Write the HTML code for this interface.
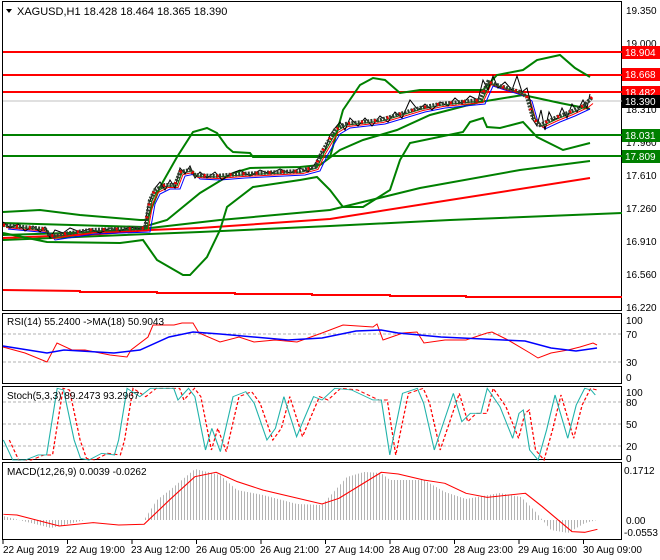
<!DOCTYPE html>
<html><head><meta charset="utf-8">
<style>
html,body{margin:0;padding:0;background:#fff;}
svg{display:block;font-family:"Liberation Sans",sans-serif;font-size:10px;}
</style></head><body>
<svg width="660" height="560" xmlns="http://www.w3.org/2000/svg">
<defs>
<pattern id="hp" x="0" y="0" width="3" height="10" patternUnits="userSpaceOnUse"><rect x="1" y="0" width="1" height="10" fill="#b4b4b4"/></pattern>
</defs>
<rect width="660" height="560" fill="#fff"/>
<g fill="none" stroke="#000" stroke-width="1">
<rect x="2.5" y="1.5" width="619" height="309"/>
<rect x="2.5" y="313.5" width="619" height="70"/>
<rect x="2.5" y="386.5" width="619" height="73"/>
<rect x="2.5" y="462.5" width="619" height="77"/>
</g>
<g stroke="#000"><line x1="3" y1="540" x2="3" y2="544"/><line x1="67.5" y1="540" x2="67.5" y2="544"/><line x1="132" y1="540" x2="132" y2="544"/><line x1="196.5" y1="540" x2="196.5" y2="544"/><line x1="261" y1="540" x2="261" y2="544"/><line x1="325.5" y1="540" x2="325.5" y2="544"/><line x1="390" y1="540" x2="390" y2="544"/><line x1="454.5" y1="540" x2="454.5" y2="544"/><line x1="519" y1="540" x2="519" y2="544"/><line x1="583.5" y1="540" x2="583.5" y2="544"/></g>

<line x1="3" y1="101" x2="622" y2="101" stroke="#c0c0c0"/>
<g stroke-width="2"><line x1="3" y1="52" x2="622" y2="52" stroke="#f00"/><line x1="3" y1="75" x2="622" y2="75" stroke="#f00"/><line x1="3" y1="92" x2="622" y2="92" stroke="#f00"/><line x1="3" y1="135" x2="622" y2="135" stroke="#008000"/><line x1="3" y1="156" x2="622" y2="156" stroke="#008000"/></g>
<g fill="none" stroke-width="2">
<polyline stroke="#f00" points="3,290 80,291 80,292 157,292 157,293 235,293 235,294 312,294 312,295 390,295 390,296 466,296 466,297 622,297"/>
<polyline stroke="#008000" points="3,240 100,236 200,232 330,226 450,220 622,213"/>
<polyline stroke="#f00" points="3,238 100,234 150,230 200,228 330,219 450,200 590,178"/>
<polyline stroke="#008000" points="3,235 100,232 150,228 220,220 330,210 420,188 520,170 590,161"/>
<polyline stroke="#008000" points="3,212 40,210 80,215 140,220 147,220 160,187 177,157 193,132 207,128 217,133 227,147 233,152 250,153 253,157 330,157 343,110 360,85 373,78 385,80 400,93 420,90 463,90 483,90 497,75 523,70 537,60 560,55 575,68 590,77"/>
<polyline stroke="#008000" points="3,233 47,242 120,243 143,240 157,260 183,275 190,275 207,257 220,230 227,207 253,187 300,180 317,177 330,190 343,207 363,207 390,190 400,160 410,143 463,132 470,122 483,118 487,127 500,128 523,122 537,137 563,150 590,143"/>
<polyline stroke="#008000" points="3,223 143,227 167,220 200,193 233,173 250,168 300,167 320,165 340,150 363,140 397,130 430,115 480,102 523,95 537,98 560,103 590,109"/>
</g>
<g fill="none" stroke-width="1">
<polyline stroke="#00f" transform="translate(5,4)" points="3,225 45,229 50,236 90,230 145,228 150,200 155,190 165,185 175,185 180,172 190,170 195,175 215,176 240,174 300,171 315,167 322,152 335,130 345,124 380,120 420,108 440,104 480,100 488,82 500,86 520,92 527,97 533,118 540,125 555,118 570,112 585,105"/>
<polyline stroke="#f00" transform="translate(3,2.5)" points="3,225 45,229 50,236 90,230 145,228 150,200 155,190 165,185 175,185 180,172 190,170 195,175 215,176 240,174 300,171 315,167 322,152 335,130 345,124 380,120 420,108 440,104 480,100 488,82 500,86 520,92 527,97 533,118 540,125 555,118 570,112 585,105 590,101"/>
<polyline stroke="#008000" transform="translate(2,1)" points="3,225 45,229 50,236 90,230 145,228 150,200 155,190 165,185 175,185 180,172 190,170 195,175 215,176 240,174 300,171 315,167 322,152 335,130 345,124 380,120 420,108 440,104 480,100 488,82 500,86 520,92 527,97 533,118 540,125 555,118 570,112 585,105"/>
</g>
<polyline fill="none" stroke="#000" stroke-width="1" points="3,222 10,228 18,224 25,231 33,226 40,232 45,227 50,238 55,230 63,233 70,228 80,232 90,229 100,233 110,228 120,231 130,227 140,229 145,226 148,205 152,196 155,188 160,182 165,190 170,180 175,188 180,168 185,174 190,166 195,178 200,172 207,178 215,172 222,180 230,174 240,170 250,176 260,170 270,174 280,169 290,173 300,168 308,172 315,164 320,155 325,150 330,135 335,128 340,122 345,130 350,118 358,126 365,118 372,126 380,116 388,122 395,112 402,118 410,100 418,110 425,104 432,110 440,102 448,106 455,98 462,104 470,96 478,100 483,80 488,90 493,76 498,88 505,82 512,90 517,76 522,92 527,88 530,100 533,120 537,126 541,110 545,130 549,112 553,120 558,118 562,108 567,118 572,104 577,112 583,100 587,108 590,94"/>
<polyline fill="none" stroke="#2f3f2f" stroke-width="4" stroke-dasharray="2,1.2" points="3,225 45,229 50,236 90,230 145,228 150,200 155,190 165,185 175,185 180,172 190,170 195,175 215,176 240,174 300,171 315,167 322,152 335,130 345,124 380,120 420,108 440,104 480,100 488,82 500,86 520,92 527,97 533,118 540,125 555,118 570,112 585,105 592,97"/>
<polyline fill="none" stroke="#e00" stroke-width="3" stroke-dasharray="2,11" points="3,225 45,229 50,236 90,230 145,228 150,200 155,190 165,185 175,185 180,172 190,170 195,175 215,176 240,174 300,171 315,167 322,152 335,130 345,124 380,120 420,108 440,104 480,100 488,82 500,86 520,92 527,97 533,118 540,125 555,118 570,112 585,105 592,97"/>

<line x1="3" y1="334" x2="622" y2="334" stroke="#b0b0b0" stroke-dasharray="3,2"/>
<line x1="3" y1="362" x2="622" y2="362" stroke="#b0b0b0" stroke-dasharray="3,2"/>
<polyline fill="none" stroke="#f00" points="3,347 25,353 47,362 57,343 72,350 85,350 110,355 127,357 131,350 148,337 153,325 174,325 182,323 193,323 199,333 220,342 239,337 254,342 275,340 297,342 322,333 343,325 373,327 377,324 383,340 403,333 417,332 424,343 445,340 466,340 487,333 492,332 508,340 530,353 538,358 551,353 568,350 580,347 593,343 597,345"/>
<polyline fill="none" stroke="#00f" stroke-width="1.5" points="3,346 47,353 64,350 114,353 140,350 169,337 193,332 220,334 288,340 322,338 356,331 381,330 398,333 441,337 525,341 551,348 576,351 597,348"/>

<g stroke="#b0b0b0" stroke-dasharray="3,2"><line x1="3" y1="402" x2="622" y2="402"/><line x1="3" y1="424" x2="622" y2="424"/><line x1="3" y1="446" x2="622" y2="446"/></g>
<g transform="matrix(0.4237,0,0,0.3333,0,300)" fill="none">
<polyline transform="translate(14,0)" stroke="#f00" stroke-width="3" stroke-dasharray="9,6" points="8,420 30,480 60,480 90,465 110,465 135,265 150,270 175,420 190,475 210,480 240,460 270,465 280,420 300,265 330,290 355,265 410,265 420,300 445,265 460,290 485,450 500,385 520,455 550,290 580,275 600,310 630,420 650,385 670,290 700,410 740,290 760,300 790,265 830,270 880,300 900,300 920,465 950,280 985,265 1000,310 1025,450 1070,280 1090,365 1110,340 1135,340 1150,265 1180,320 1210,415 1225,340 1235,330 1250,450 1270,480 1290,390 1310,285 1340,415 1360,315 1380,265 1395,270"/>
<polyline stroke="#20b2aa" stroke-width="2.6" points="8,420 30,480 60,480 90,465 110,465 135,265 150,270 175,420 190,475 210,480 240,460 270,465 280,420 300,265 330,290 355,265 410,265 420,300 445,265 460,290 485,450 500,385 520,455 550,290 580,275 600,310 630,420 650,385 670,290 700,410 740,290 760,300 790,265 830,270 880,300 900,300 920,465 950,280 985,265 1000,310 1025,450 1070,280 1090,365 1110,340 1135,340 1150,265 1180,320 1210,415 1225,340 1235,330 1250,450 1270,480 1290,390 1310,285 1340,415 1360,315 1380,265 1395,270 1405,285"/>
</g>

<polygon fill="url(#hp)" points="3,516 51,528 85,520 144,520 157,500 170,490 195,469 220,475 237,490 263,495 297,504 322,505 347,477 364,472 381,473 390,480 424,480 445,492 466,499 500,493 521,497 534,510 551,530 568,533 585,523 597,520 3,520"/>
<g transform="matrix(0.4237,0,0,0.3333,0,300)" fill="none">
<polyline stroke="#f00" stroke-width="3" points="8,643 40,645 140,678 220,668 280,675 340,673 400,600 460,530 510,517 560,545 620,570 760,612 800,595 900,517 940,522 1000,540 1050,550 1100,580 1150,592 1240,580 1280,620 1350,695 1380,697 1410,688"/>
</g>

<path d="M6 9 L12 9 L9 13 Z" fill="#000"/>
<text x="17" y="15" font-size="11">XAGUSD,H1  18.428 18.464 18.365 18.390</text>
<text x="7" y="325">RSI(14) 55.2400  -&gt;MA(18) 50.9043</text>
<text x="7" y="399">Stoch(5,3,3) 89.2473 93.2967</text>
<text x="7" y="475">MACD(12,26,9) 0.0039 -0.0262</text>
<g fill="#000">
<text x="626" y="14">19.350</text>
<text x="626" y="47">19.000</text>
<text x="626" y="113">18.310</text>
<text x="626" y="146">17.960</text>
<text x="626" y="179">17.610</text>
<text x="626" y="212">17.260</text>
<text x="626" y="245">16.910</text>
<text x="626" y="278">16.560</text>
<text x="626" y="311">16.220</text>
<text x="626" y="324">100</text>
<text x="626" y="338">70</text>
<text x="626" y="366">30</text>
<text x="626" y="381">0</text>
<text x="626" y="396">100</text>
<text x="626" y="406">80</text>
<text x="626" y="428">50</text>
<text x="626" y="450">20</text>
<text x="626" y="462">0</text>
<text x="624" y="474">0.1712</text>
<text x="626" y="524">0.00</text>
<text x="624" y="536">-0.0553</text>
</g>
<g fill="#fff">
<rect x="622" y="46" width="38" height="13" fill="#f00"/><text x="625" y="56">18.904</text>
<rect x="622" y="68" width="38" height="13" fill="#f00"/><text x="625" y="78">18.668</text>
<rect x="622" y="86" width="38" height="13" fill="#f00"/><text x="625" y="96">18.482</text>
<rect x="622" y="95" width="38" height="13" fill="#000"/><text x="625" y="105">18.390</text>
<rect x="622" y="129" width="38" height="13" fill="#008000"/><text x="625" y="139">18.031</text>
<rect x="622" y="150" width="38" height="13" fill="#008000"/><text x="625" y="160">17.809</text>
</g>
<g fill="#000">
<text x="3" y="553">22 Aug 2019</text>
<text x="66" y="553">22 Aug 19:00</text>
<text x="131" y="553">23 Aug 12:00</text>
<text x="196" y="553">26 Aug 05:00</text>
<text x="260" y="553">26 Aug 21:00</text>
<text x="325" y="553">27 Aug 14:00</text>
<text x="389" y="553">28 Aug 07:00</text>
<text x="454" y="553">28 Aug 23:00</text>
<text x="518" y="553">29 Aug 16:00</text>
<text x="583" y="553">30 Aug 09:00</text>
</g>
</svg>
</body></html>
